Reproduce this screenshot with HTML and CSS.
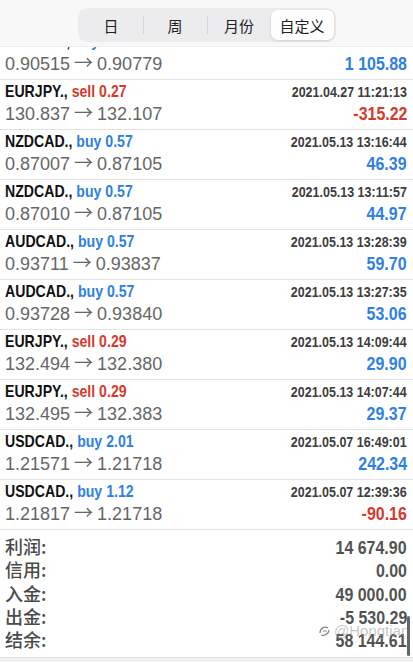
FILE: index.html
```
<!DOCTYPE html>
<html lang="zh-CN">
<head>
    <meta charset="UTF-8">
    <meta name="viewport" content="width=device-width, initial-scale=1.0">
    <title>历史</title>
    <link rel="stylesheet" href="styles.css">
</head>
<body>
    <header class="topbar">
        <nav class="segments">
            <button type="button" class="seg">日</button>
            <span class="seg-div"></span>
            <button type="button" class="seg">周</button>
            <span class="seg-div"></span>
            <button type="button" class="seg">月份</button>
            <button type="button" class="seg active">自定义</button>
        </nav>
    </header>

    <main class="deals">
        <div class="deal">
            <div class="line1"><span class="sym">USDCHF., <span class="buy">buy 0.50</span></span><span class="time">2021.04.27 10:02:41</span></div>
            <div class="line2"><span class="price">0.90515<span class="arrow">→</span>0.90779</span><span class="pl buy">1 105.88</span></div>
        </div>
        <div class="deal">
            <div class="line1"><span class="sym">EURJPY., <span class="sell">sell 0.27</span></span><span class="time">2021.04.27 11:21:13</span></div>
            <div class="line2"><span class="price">130.837<span class="arrow">→</span>132.107</span><span class="pl sell">-315.22</span></div>
        </div>
        <div class="deal">
            <div class="line1"><span class="sym">NZDCAD., <span class="buy">buy 0.57</span></span><span class="time">2021.05.13 13:16:44</span></div>
            <div class="line2"><span class="price">0.87007<span class="arrow">→</span>0.87105</span><span class="pl buy">46.39</span></div>
        </div>
        <div class="deal">
            <div class="line1"><span class="sym">NZDCAD., <span class="buy">buy 0.57</span></span><span class="time">2021.05.13 13:11:57</span></div>
            <div class="line2"><span class="price">0.87010<span class="arrow">→</span>0.87105</span><span class="pl buy">44.97</span></div>
        </div>
        <div class="deal">
            <div class="line1"><span class="sym">AUDCAD., <span class="buy">buy 0.57</span></span><span class="time">2021.05.13 13:28:39</span></div>
            <div class="line2"><span class="price">0.93711<span class="arrow">→</span>0.93837</span><span class="pl buy">59.70</span></div>
        </div>
        <div class="deal">
            <div class="line1"><span class="sym">AUDCAD., <span class="buy">buy 0.57</span></span><span class="time">2021.05.13 13:27:35</span></div>
            <div class="line2"><span class="price">0.93728<span class="arrow">→</span>0.93840</span><span class="pl buy">53.06</span></div>
        </div>
        <div class="deal">
            <div class="line1"><span class="sym">EURJPY., <span class="sell">sell 0.29</span></span><span class="time">2021.05.13 14:09:44</span></div>
            <div class="line2"><span class="price">132.494<span class="arrow">→</span>132.380</span><span class="pl buy">29.90</span></div>
        </div>
        <div class="deal">
            <div class="line1"><span class="sym">EURJPY., <span class="sell">sell 0.29</span></span><span class="time">2021.05.13 14:07:44</span></div>
            <div class="line2"><span class="price">132.495<span class="arrow">→</span>132.383</span><span class="pl buy">29.37</span></div>
        </div>
        <div class="deal">
            <div class="line1"><span class="sym">USDCAD., <span class="buy">buy 2.01</span></span><span class="time">2021.05.07 16:49:01</span></div>
            <div class="line2"><span class="price">1.21571<span class="arrow">→</span>1.21718</span><span class="pl buy">242.34</span></div>
        </div>
        <div class="deal">
            <div class="line1"><span class="sym">USDCAD., <span class="buy">buy 1.12</span></span><span class="time">2021.05.07 12:39:36</span></div>
            <div class="line2"><span class="price">1.21817<span class="arrow">→</span>1.21718</span><span class="pl sell">-90.16</span></div>
        </div>

        <section class="summary">
            <div class="sum-row"><span class="sum-label">利润:</span><span class="sum-value">14 674.90</span></div>
            <div class="sum-row"><span class="sum-label">信用:</span><span class="sum-value">0.00</span></div>
            <div class="sum-row"><span class="sum-label">入金:</span><span class="sum-value">49 000.00</span></div>
            <div class="sum-row"><span class="sum-label">出金:</span><span class="sum-value">-5 530.29</span></div>
            <div class="sum-row"><span class="sum-label">结余:</span><span class="sum-value">58 144.61</span></div>
        </section>
        <div class="bottom-band"></div>
    </main>

    <!-- watermark + scroll indicator sit over the summary -->
    <div class="watermark">
        <svg width="14" height="14" viewBox="0 0 14 14"><path d="M2 9 C2 4 7 2 10 4 M3 11 C6 12 11 10 11 6 M5 7 L9 7" fill="none" stroke="#888" stroke-width="1.2"/></svg>
        <span>@Hongtian</span>
    </div>
    <div class="scroll-ind"></div>
</body>
</html>
```

FILE: styles.css
```
* {
    box-sizing: border-box;
}

body {
    margin: 0;
    padding: 0;
    background-color: #fff;
    font-family: "Liberation Sans", Arial, sans-serif;
    overflow: hidden;
}

.topbar {
    position: fixed;
    top: 0;
    left: 0;
    right: 0;
    height: 47px;
    background-color: #f8f8f8;
    border-bottom: 1px solid #ececec;
    display: flex;
    justify-content: center;
    align-items: flex-start;
    padding-top: 8px;
    z-index: 10;
}

.segments {
    display: flex;
    align-items: center;
    width: 258px;
    height: 34px;
    padding: 2px;
    background-color: #ececee;
    border-radius: 9px;
}

.seg {
    flex: 1;
    height: 30px;
    border: none;
    background: none;
    font-family: "Noto Sans CJK SC", sans-serif;
    font-size: 15px;
    color: #222;
    padding: 0;
    border-radius: 7px;
}

.seg.active {
    background-color: #fff;
    box-shadow: 0 1px 3px rgba(0, 0, 0, 0.12);
}

.seg-div {
    width: 1px;
    height: 18px;
    background-color: #d6d6d8;
}

.deals {
    padding-top: 30px;
}

.deal {
    height: 50px;
    padding: 2px 6px 0 5px;
    border-bottom: 1px solid #e2e2e2;
}

.line1, .line2 {
    display: flex;
    justify-content: space-between;
    align-items: baseline;
}

.line1 {
    height: 19px;
    line-height: 19px;
}

.line2 {
    height: 27px;
    line-height: 26px;
}

/* the bold fonts in the app are narrow, squeeze Arial to match */
.sym {
    display: inline-block;
    font-weight: bold;
    font-size: 17px;
    color: #111;
    white-space: nowrap;
    transform: scaleX(0.83);
    transform-origin: left center;
}

.time {
    display: inline-block;
    font-weight: bold;
    font-size: 14.5px;
    color: #3d3d3d;
    white-space: nowrap;
    transform: scaleX(0.86);
    transform-origin: right center;
}

.price {
    font-size: 18px;
    color: #666;
    white-space: nowrap;
}

.arrow {
    font-family: "Noto Sans CJK SC", sans-serif;
    font-size: 19px;
    line-height: 1;
    margin: 0 4px;
    color: #666;
}

.pl {
    display: inline-block;
    font-weight: bold;
    font-size: 19px;
    white-space: nowrap;
    transform: scaleX(0.84);
    transform-origin: right center;
}

.buy {
    color: #2f7fe4;
}

.sell {
    color: #d63a2d;
}

.summary {
    padding: 5px 6px 6px 5px;
}

.sum-row {
    display: flex;
    justify-content: space-between;
    align-items: baseline;
    height: 23.3px;
    line-height: 23.3px;
}

.sum-label {
    font-family: "Noto Sans CJK SC", sans-serif;
    font-weight: 500;
    font-size: 18px;
    color: #4a4a4a;
}

.sum-value {
    display: inline-block;
    font-weight: bold;
    font-size: 19px;
    color: #525252;
    white-space: nowrap;
    transform: scaleX(0.84);
    transform-origin: right center;
}

.bottom-band {
    height: 20px;
    background-color: #f1f1f1;
    border-top: 1px solid #e4e4e4;
}

.watermark {
    position: absolute;
    top: 622px;
    left: 318px;
    display: flex;
    align-items: center;
    gap: 2px;
    font-size: 15px;
    color: rgba(160, 160, 160, 0.6);
}

.scroll-ind {
    position: absolute;
    top: 616px;
    left: 407px;
    width: 3px;
    height: 40px;
    border-radius: 2px;
    background-color: #666;
}
```
